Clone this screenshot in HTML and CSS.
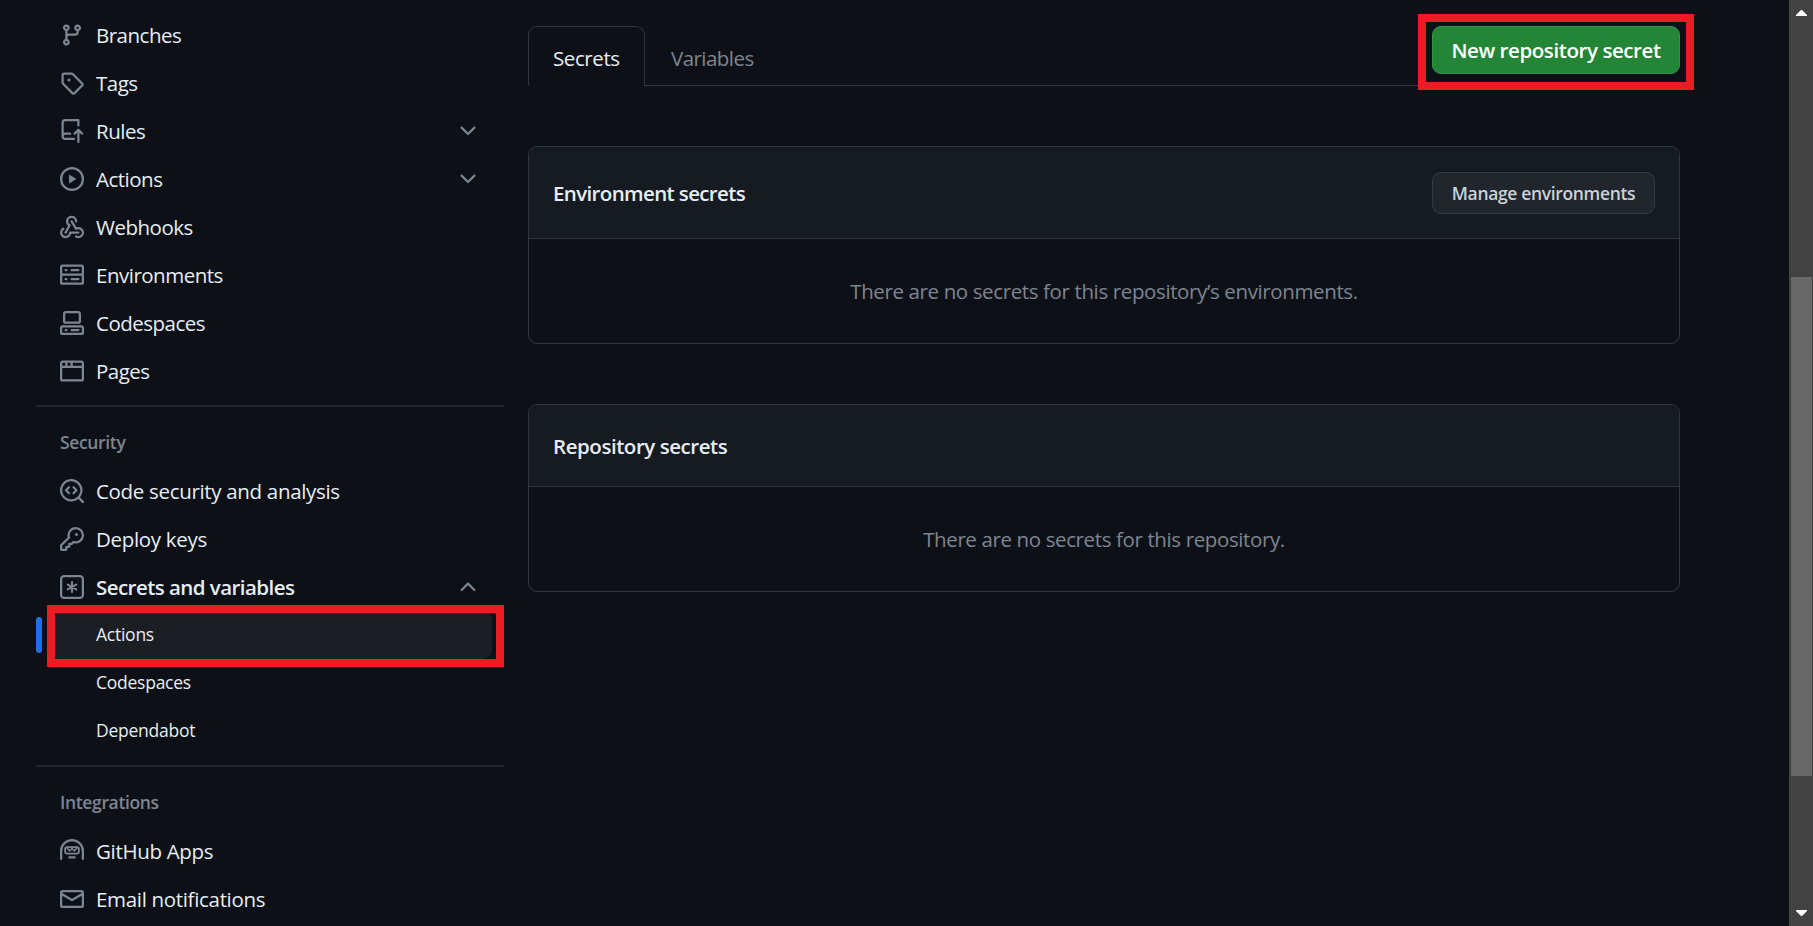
FILE: index.html
```html
<!DOCTYPE html>
<html lang="en">
<head>
<meta charset="utf-8">
<title>Actions secrets</title>
<link rel="stylesheet" href="styles.css">
</head>
<body>
<div class="app">
  <nav class="sidebar">
    <ul class="nav-list">
      <li class="nav-item"><svg class="icon" viewBox="0 0 16 16"><path d="M9.5 3.25a2.25 2.25 0 1 1 3 2.122V6A2.5 2.5 0 0 1 10 8.5H6a1 1 0 0 0-1 1v1.128a2.251 2.251 0 1 1-1.5 0V5.372a2.25 2.25 0 1 1 1.5 0v1.836A2.493 2.493 0 0 1 6 7h4a1 1 0 0 0 1-1v-.628A2.25 2.25 0 0 1 9.5 3.25Zm-6 0a.75.75 0 1 0 1.5 0 .75.75 0 0 0-1.5 0Zm8.25-.75a.75.75 0 1 0 0 1.5.75.75 0 0 0 0-1.5ZM4.25 12a.75.75 0 1 0 0 1.5.75.75 0 0 0 0-1.5Z"/></svg><span class="label">Branches</span></li>
      <li class="nav-item"><svg class="icon" viewBox="0 0 16 16"><path d="M1 7.775V2.75C1 1.784 1.784 1 2.75 1h5.025c.464 0 .91.184 1.238.513l6.25 6.25a1.75 1.75 0 0 1 0 2.474l-5.026 5.026a1.75 1.75 0 0 1-2.474 0l-6.25-6.25A1.752 1.752 0 0 1 1 7.775Zm1.5 0c0 .066.026.13.073.177l6.25 6.25a.25.25 0 0 0 .354 0l5.025-5.025a.25.25 0 0 0 0-.354l-6.25-6.25a.25.25 0 0 0-.177-.073H2.75a.25.25 0 0 0-.25.25ZM6 5a1 1 0 1 1 0 2 1 1 0 0 1 0-2Z"/></svg><span class="label">Tags</span></li>
      <li class="nav-item"><svg class="icon" viewBox="0 0 16 16"><path d="M1 2.5A2.5 2.5 0 0 1 3.5 0h8.75a.75.75 0 0 1 .75.75v3.5a.75.75 0 0 1-1.5 0V1.5h-8a1 1 0 0 0-1 1v6.708A2.493 2.493 0 0 1 3.5 9h3.25a.75.75 0 0 1 0 1.5H3.5a1 1 0 0 0 0 2h5.75a.75.75 0 0 1 0 1.5H3.5A2.5 2.5 0 0 1 1 11.5Zm13.23 7.79h-.001l-1.224-1.224v6.184a.75.75 0 0 1-1.5 0V9.066L10.28 10.29a.75.75 0 0 1-1.06-1.061l2.505-2.504a.75.75 0 0 1 1.06 0L15.29 9.23a.751.751 0 0 1-.018 1.042.751.751 0 0 1-1.042.018Z"/></svg><span class="label">Rules</span><svg class="icon" viewBox="0 0 16 16"><path d="M12.78 5.22a.749.749 0 0 1 0 1.06l-4.25 4.25a.749.749 0 0 1-1.06 0L3.22 6.28a.749.749 0 1 1 1.06-1.06L8 8.939l3.72-3.719a.749.749 0 0 1 1.06 0Z"/></svg></li>
      <li class="nav-item"><svg class="icon" viewBox="0 0 16 16"><path d="M8 0a8 8 0 1 1 0 16A8 8 0 0 1 8 0ZM1.5 8a6.5 6.5 0 1 0 13 0 6.5 6.5 0 0 0-13 0Zm4.879-2.773 4.264 2.559a.25.25 0 0 1 0 .428l-4.264 2.559A.25.25 0 0 1 6 10.559V5.442a.25.25 0 0 1 .379-.215Z"/></svg><span class="label">Actions</span><svg class="icon" viewBox="0 0 16 16"><path d="M12.78 5.22a.749.749 0 0 1 0 1.06l-4.25 4.25a.749.749 0 0 1-1.06 0L3.22 6.28a.749.749 0 1 1 1.06-1.06L8 8.939l3.72-3.719a.749.749 0 0 1 1.06 0Z"/></svg></li>
      <li class="nav-item"><svg class="icon" viewBox="0 0 16 16"><path d="M5.5 4.25a2.25 2.25 0 0 1 4.5 0 .75.75 0 0 0 1.5 0 3.75 3.75 0 1 0-6.14 2.889l-2.272 4.258a.75.75 0 0 0 1.324.706L7 7.25a.75.75 0 0 0-.309-1.015A2.25 2.25 0 0 1 5.5 4.25Z"/><path d="M7.364 3.607a.75.75 0 0 1 1.03.257l2.608 4.349a3.75 3.75 0 1 1-.628 6.785.75.75 0 0 1 .752-1.299 2.25 2.25 0 1 0-.033-3.88.75.75 0 0 1-1.03-.256L7.107 4.636a.75.75 0 0 1 .257-1.03Z"/><path d="M2.9 8.776A.75.75 0 0 1 2.625 9.8 2.25 2.25 0 1 0 6 11.75a.75.75 0 0 1 .75-.751h5.5a.75.75 0 0 1 0 1.5H7.425a3.751 3.751 0 1 1-5.55-3.998.75.75 0 0 1 1.024.274Z"/></svg><span class="label">Webhooks</span></li>
      <li class="nav-item"><svg class="icon" viewBox="0 0 16 16"><path d="M1.75 1h12.5c.966 0 1.75.784 1.75 1.75v4c0 .372-.116.717-.314 1 .198.283.314.628.314 1v4a1.75 1.75 0 0 1-1.75 1.75H1.75A1.75 1.75 0 0 1 0 12.75v-4c0-.358.109-.707.314-1a1.739 1.739 0 0 1-.314-1v-4C0 1.784.784 1 1.75 1ZM1.5 2.75v4c0 .138.112.25.25.25h12.5a.25.25 0 0 0 .25-.25v-4a.25.25 0 0 0-.25-.25H1.75a.25.25 0 0 0-.25.25Zm.25 5.75a.25.25 0 0 0-.25.25v4c0 .138.112.25.25.25h12.5a.25.25 0 0 0 .25-.25v-4a.25.25 0 0 0-.25-.25ZM7 4.75A.75.75 0 0 1 7.75 4h4.5a.75.75 0 0 1 0 1.5h-4.5A.75.75 0 0 1 7 4.75ZM7.75 10h4.5a.75.75 0 0 1 0 1.5h-4.5a.75.75 0 0 1 0-1.5ZM3 4.75A.75.75 0 0 1 3.75 4h.5a.75.75 0 0 1 0 1.5h-.5A.75.75 0 0 1 3 4.75ZM3.75 10h.5a.75.75 0 0 1 0 1.5h-.5a.75.75 0 0 1 0-1.5Z"/></svg><span class="label">Environments</span></li>
      <li class="nav-item"><svg class="icon" viewBox="0 0 16 16"><path d="M0 11.25c0-.966.784-1.75 1.75-1.75h12.5c.966 0 1.75.784 1.75 1.75v3A1.75 1.75 0 0 1 14.25 16H1.75A1.75 1.75 0 0 1 0 14.25Zm2-9.5C2 .784 2.784 0 3.75 0h8.5C13.216 0 14 .784 14 1.75v5a1.75 1.75 0 0 1-1.75 1.75h-8.5A1.75 1.75 0 0 1 2 6.75Zm1.75-.25a.25.25 0 0 0-.25.25v5c0 .138.112.25.25.25h8.5a.25.25 0 0 0 .25-.25v-5a.25.25 0 0 0-.25-.25Zm-2 9.5a.25.25 0 0 0-.25.25v3c0 .138.112.25.25.25h12.5a.25.25 0 0 0 .25-.25v-3a.25.25 0 0 0-.25-.25Z"/><path d="M7 12.75a.75.75 0 0 1 .75-.75h4.5a.75.75 0 0 1 0 1.5h-4.5a.75.75 0 0 1-.75-.75Zm-4 0a.75.75 0 0 1 .75-.75h.5a.75.75 0 0 1 0 1.5h-.5a.75.75 0 0 1-.75-.75Z"/></svg><span class="label">Codespaces</span></li>
      <li class="nav-item"><svg class="icon" viewBox="0 0 16 16"><path d="M0 2.75C0 1.784.784 1 1.75 1h12.5c.966 0 1.75.784 1.75 1.75v10.5A1.75 1.75 0 0 1 14.25 15H1.75A1.75 1.75 0 0 1 0 13.25ZM14.5 6h-13v7.25c0 .138.112.25.25.25h12.5a.25.25 0 0 0 .25-.25Zm-6-3.5v2h6V2.75a.25.25 0 0 0-.25-.25ZM5 2.5v2h2v-2Zm-3.25 0a.25.25 0 0 0-.25.25V4.5h2v-2Z"/></svg><span class="label">Pages</span></li>
    </ul>
    <hr class="divider">
    <h3 class="group-title">Security</h3>
    <ul class="nav-list">
      <li class="nav-item"><svg class="icon" viewBox="0 0 16 16"><path d="M8.47 4.97a.75.75 0 0 0 0 1.06L9.94 7.5 8.47 8.97a.75.75 0 1 0 1.06 1.06l2-2a.75.75 0 0 0 0-1.06l-2-2a.75.75 0 0 0-1.06 0ZM6.53 6.03a.75.75 0 0 0-1.06-1.06l-2 2a.75.75 0 0 0 0 1.06l2 2a.75.75 0 1 0 1.06-1.06L5.06 7.5l1.47-1.47Z"/><path d="M12.246 13.307a7.501 7.501 0 1 1 1.06-1.06l2.474 2.473a.749.749 0 1 1-1.06 1.06l-2.474-2.473ZM1.5 7.5a6.002 6.002 0 0 0 3.608 5.504 6.002 6.002 0 0 0 6.486-1.117.748.748 0 0 1 .292-.293A6 6 0 1 0 1.5 7.5Z"/></svg><span class="label label-long">Code security and analysis</span></li>
      <li class="nav-item"><svg class="icon" viewBox="0 0 16 16"><path d="M10.5 0a5.499 5.499 0 1 1-1.288 10.848l-.932.932a.749.749 0 0 1-.53.22H7v.75a.749.749 0 0 1-.22.53l-.5.5a.749.749 0 0 1-.53.22H5v.75a.749.749 0 0 1-.22.53l-.5.5a.749.749 0 0 1-.53.22h-2A1.75 1.75 0 0 1 0 14.25v-2c0-.199.079-.389.22-.53l4.932-4.932A5.5 5.5 0 0 1 10.5 0Zm-4 5.5c-.001.431.069.86.205 1.269a.75.75 0 0 1-.181.768L1.5 12.56v1.69c0 .138.112.25.25.25h1.69l.06-.06v-1.19a.75.75 0 0 1 .75-.75h1.19l.06-.06v-1.19a.75.75 0 0 1 .75-.75h1.19l1.023-1.025a.75.75 0 0 1 .768-.18A4 4 0 1 0 6.5 5.5ZM11 6a1 1 0 1 1 0-2 1 1 0 0 1 0 2Z"/></svg><span class="label label-long">Deploy keys</span></li>
      <li class="nav-item"><svg class="icon" viewBox="0 0 16 16"><path d="M0 2.75A2.75 2.75 0 0 1 2.75 0h10.5A2.75 2.75 0 0 1 16 2.75v10.5A2.75 2.75 0 0 1 13.25 16H2.75A2.75 2.75 0 0 1 0 13.25ZM2.75 1.5c-.69 0-1.25.56-1.25 1.25v10.5c0 .69.56 1.25 1.25 1.25h10.5c.69 0 1.25-.56 1.25-1.25V2.75c0-.69-.56-1.25-1.25-1.25Z"/><path class="stroke stroke-bold" d="M8 4.75v6.5M5.2 6.4l5.6 3.2M5.2 9.6l5.6-3.2"/></svg><span class="label label-strong">Secrets and variables</span><svg class="icon" viewBox="0 0 16 16"><path d="M3.22 10.53a.749.749 0 0 1 0-1.06l4.25-4.25a.749.749 0 0 1 1.06 0l4.25 4.25a.749.749 0 1 1-1.06 1.06L8 6.811 4.28 10.53a.749.749 0 0 1-1.06 0Z"/></svg></li>
      <li class="sub-item sub-item-active"><span class="marker"></span>Actions<span class="callout callout-nav"></span></li>
      <li class="sub-item">Codespaces</li>
      <li class="sub-item">Dependabot</li>
    </ul>
    <hr class="divider">
    <h3 class="group-title">Integrations</h3>
    <ul class="nav-list">
      <li class="nav-item"><svg class="icon" viewBox="0 0 16 16"><path d="M0 8a8 8 0 1 1 16 0v5.25a.75.75 0 0 1-1.5 0V8a6.5 6.5 0 1 0-13 0v5.25a.75.75 0 0 1-1.5 0V8Zm5.5 4.25a.75.75 0 0 1 .75-.75h3.5a.75.75 0 0 1 0 1.5h-3.5a.75.75 0 0 1-.75-.75Z"/><rect class="stroke" x="3.4" y="5.35" width="9.2" height="4.4" rx="1.4"/><path class="stroke stroke-thin" d="M4.8 6.2 6.4 7.9 8 6.3 9.6 7.9 11.2 6.2"/></svg><span class="label label-long">GitHub Apps</span></li>
      <li class="nav-item"><svg class="icon" viewBox="0 0 16 16"><path d="M1.75 2h12.5c.966 0 1.75.784 1.75 1.75v8.5A1.75 1.75 0 0 1 14.25 14H1.75A1.75 1.75 0 0 1 0 12.25v-8.5C0 2.784.784 2 1.75 2ZM1.5 12.251c0 .138.112.25.25.25h12.5a.25.25 0 0 0 .25-.25V5.809L8.38 9.397a.75.75 0 0 1-.76 0L1.5 5.809v6.442Zm13-8.181v-.32a.25.25 0 0 0-.25-.25H1.75a.25.25 0 0 0-.25.25v.32L8 7.88Z"/></svg><span class="label label-long">Email notifications</span></li>
    </ul>
  </nav>

  <main class="content">
    <div class="tab-bar">
      <div class="tab tab-selected">Secrets</div>
      <div class="tab">Variables</div>
      <div class="tab-action"><button class="btn btn-primary">New repository secret</button><span class="callout callout-button"></span></div>
    </div>
    <section class="card">
      <header class="card-header card-header-tall"><h2 class="card-title">Environment secrets</h2><button class="btn btn-default">Manage environments</button></header>
      <p class="card-body">There are no secrets for this repository’s environments.</p>
    </section>
    <section class="card">
      <header class="card-header"><h2 class="card-title card-title-wide">Repository secrets</h2></header>
      <p class="card-body">There are no secrets for this repository.</p>
    </section>
  </main>

  <aside class="scrollbar">
    <svg class="arrow" viewBox="0 0 11 6"><path d="M5 0h1l5 5v1H0V5Z"/></svg>
    <div class="thumb"></div>
    <svg class="arrow arrow-down" viewBox="0 0 11 6"><path d="M0 0h11v1L6 6H5L0 1Z"/></svg>
  </aside>
</div>
</body>
</html>
```
FILE: styles.css
```css
* { box-sizing: border-box; }
body {
  margin: 0;
  overflow: hidden;
  background: #0d1117;
  color: #e6edf3;
  font-family: "Open Sans", "Noto Sans", sans-serif;
  font-size: 20.5px;
}
h2, h3, p, ul { margin: 0; padding: 0; }
ul { list-style: none; }
.app {
  display: flex;
  width: 1813px;
  height: 926px;
  overflow: hidden;
}
.sidebar {
  width: 468px;
  margin-left: 36px;
  padding-top: 11px;
  flex: none;
}
.nav-item {
  display: flex;
  align-items: center;
  gap: 12px;
  height: 48px;
  padding: 0 24px;
}
.icon {
  width: 24px;
  height: 24px;
  flex: none;
  fill: #7d8590;
}
.stroke {
  fill: none;
  stroke: #7d8590;
  stroke-width: 1.2;
  stroke-linecap: round;
}
.stroke-bold { stroke-width: 1.4; }
.stroke-thin { stroke-width: 1; }
.label {
  flex: 1;
  white-space: nowrap;
  letter-spacing: -0.5px;
}
.label-long { letter-spacing: -0.32px; }
.label-strong { font-weight: 600; letter-spacing: -0.55px; }
.divider {
  height: 2px;
  margin: 10px 0 0;
  border: 0;
  background: #21262d;
}
.group-title {
  height: 60px;
  padding-left: 24px;
  font-size: 17.5px;
  font-weight: 600;
  line-height: 70px;
  letter-spacing: -0.35px;
  color: #7d8590;
}
.sub-item {
  position: relative;
  height: 48px;
  margin: 0 12px;
  padding-left: 48px;
  font-size: 17.5px;
  line-height: 46px;
  letter-spacing: -0.25px;
}
.sub-item-active {
  border-radius: 9px;
  background: #1b1f23;
}
.marker {
  position: absolute;
  left: -12px;
  top: 6px;
  width: 6px;
  height: 36px;
  border-radius: 3px;
  background: #1f6feb;
}
.callout {
  position: absolute;
  border: 8px solid #ed1c24;
}
.callout-nav {
  left: -1px;
  top: -6px;
  width: 457px;
  height: 62px;
}
.callout-button {
  left: -14px;
  top: -12px;
  width: 276px;
  height: 76px;
}
.content {
  width: 1152px;
  margin-left: 24px;
  padding-top: 26px;
  flex: none;
}
.tab-bar {
  display: flex;
  height: 60px;
  margin-bottom: 60px;
  box-shadow: inset 0 -1px #30363d;
}
.tab {
  padding: 0 26px;
  line-height: 64px;
  letter-spacing: -0.55px;
  color: #7d8590;
  white-space: nowrap;
}
.tab-selected {
  width: 117px;
  padding: 0 24px;
  border: 1px solid #30363d;
  border-bottom: 0;
  border-radius: 9px 9px 0 0;
  background: #0d1117;
  color: #e6edf3;
  line-height: 62px;
  letter-spacing: -0.4px;
}
.tab-action {
  position: relative;
  margin-left: auto;
  height: 48px;
}
.btn {
  display: block;
  padding: 0;
  border-radius: 9px;
  font-family: inherit;
  font-weight: 600;
  white-space: nowrap;
}
.btn-primary {
  width: 248px;
  height: 48px;
  border: 1px solid #3a9149;
  background: #238636;
  color: #fff;
  font-size: 20.5px;
  letter-spacing: -0.42px;
}
.btn-default {
  width: 223px;
  height: 42px;
  padding-top: 1px;
  border: 1px solid #363b42;
  background: #21262d;
  color: #c9d1d9;
  font-size: 17.5px;
  letter-spacing: -0.35px;
}
.card {
  margin-bottom: 60px;
  border: 1px solid #30363d;
  border-radius: 9px;
  overflow: hidden;
}
.card-header {
  display: flex;
  align-items: center;
  justify-content: space-between;
  height: 82px;
  padding: 0 24px;
  border-bottom: 1px solid #30363d;
  background: #161b22;
}
.card-header-tall { height: 92px; }
.card-title {
  padding-top: 1px;
  font-size: 20.5px;
  font-weight: 600;
  letter-spacing: -0.63px;
}
.card-title-wide { letter-spacing: -0.45px; }
.card-body {
  height: 104px;
  line-height: 104px;
  text-align: center;
  letter-spacing: -0.38px;
  color: #7d8590;
}
.scrollbar {
  display: flex;
  flex-direction: column;
  align-items: center;
  width: 24px;
  margin-left: auto;
  padding: 10px 0;
  flex: none;
  background: #424242;
}
.arrow {
  width: 11px;
  height: 6px;
  flex: none;
  fill: #fff;
}
.thumb {
  width: 21px;
  height: 499px;
  margin-top: 261px;
  background: #686868;
}
.arrow-down { margin-top: auto; }
```
